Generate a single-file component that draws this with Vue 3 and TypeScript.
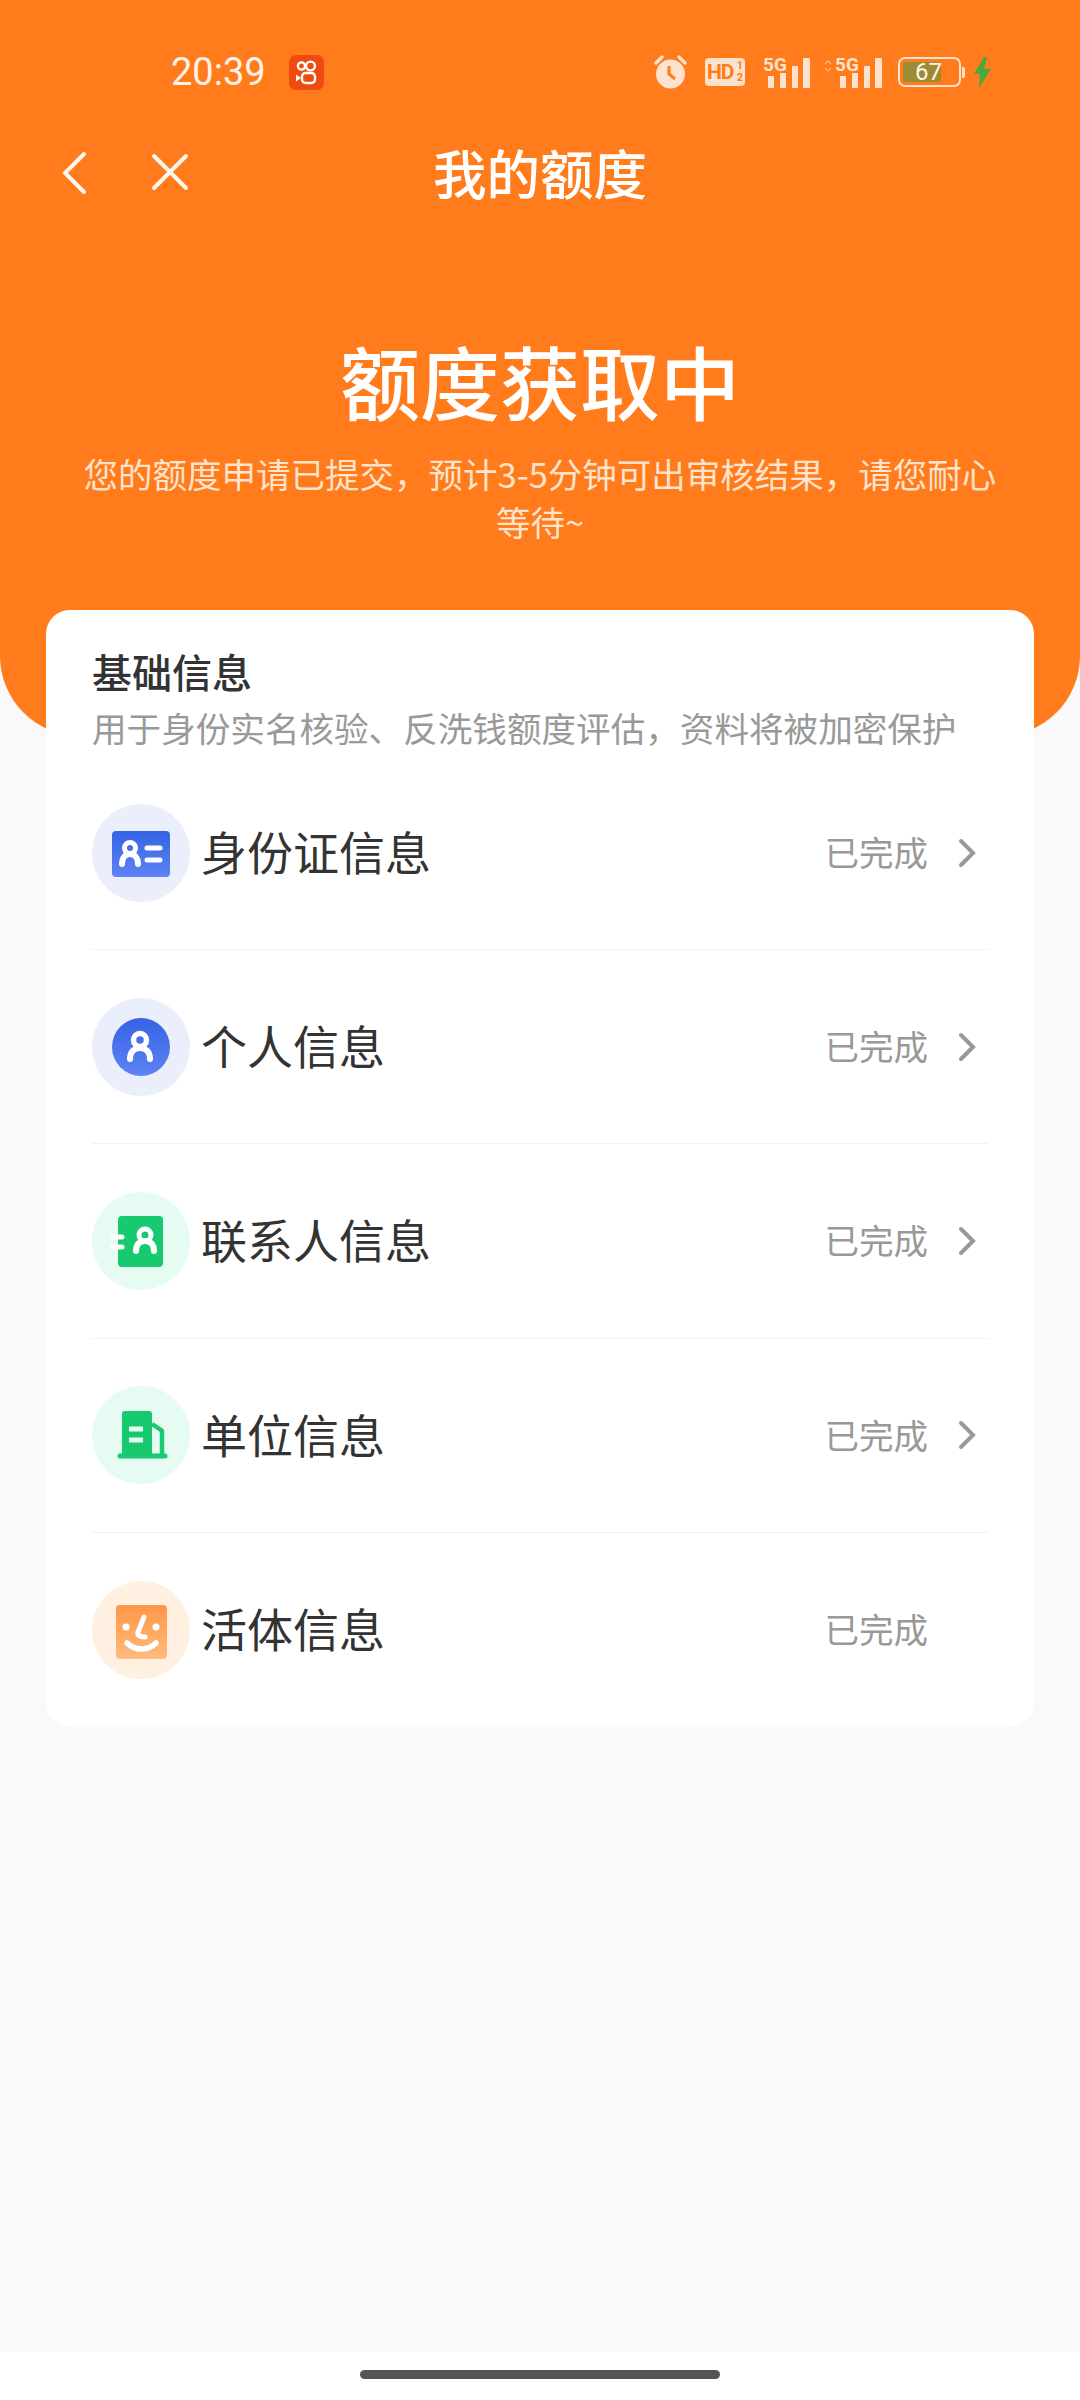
<script setup lang="ts">
interface InfoRow {
  label: string;
  icon: 'card' | 'person' | 'book' | 'building' | 'face';
  tint: string;
  arrow: boolean;
}

const rows: InfoRow[] = [
  { label: '身份证信息', icon: 'card', tint: '#ebeffb', arrow: true },
  { label: '个人信息', icon: 'person', tint: '#ebeffb', arrow: true },
  { label: '联系人信息', icon: 'book', tint: '#e6fcf2', arrow: true },
  { label: '单位信息', icon: 'building', tint: '#e6fcf2', arrow: true },
  { label: '活体信息', icon: 'face', tint: '#fff0e1', arrow: false },
];
</script>

<template>
  <div class="page">
    <header class="hero">
      <div class="status">
        <div class="status-left">
          <span class="time">20:39</span>
          <svg class="ks" width="35" height="35" viewBox="0 0 35 35">
            <rect width="35" height="35" rx="7" fill="#ee4b10" />
            <g fill="none" stroke="#fff" stroke-width="2.4">
              <circle cx="12.5" cy="11" r="3.6" />
              <circle cx="21.5" cy="11" r="4.4" />
              <rect x="13" y="18" width="13" height="10" rx="3.5" />
            </g>
            <path d="M7 19.5l5 3.5-5 3.500z" fill="#fff" />
          </svg>
        </div>
        <div class="status-right">
          <svg width="33" height="34" viewBox="0 0 33 34">
            <circle cx="16.500" cy="19" r="14.500" fill="#fde3cd" />
            <path d="M15 11v8l6 5" fill="none" stroke="#ff7b1c" stroke-width="3" />
            <path d="M2 8l6-6M31 8l-6-6" stroke="#fde3cd" stroke-width="3.500" stroke-linecap="round" />
          </svg>
          <span class="hd"><b>HD</b><i>1<br />2</i></span>
          <svg class="sig" width="47" height="32" viewBox="0 0 47 32">
            <text x="0" y="15" class="five-g">5G</text>
            <g fill="#fde3cd">
              <rect x="5" y="20" width="6" height="12" />
              <rect x="17" y="17" width="6" height="15" />
              <rect x="29" y="10" width="6" height="22" />
              <rect x="40" y="2" width="7" height="30" />
            </g>
          </svg>
          <svg class="sig" width="59" height="32" viewBox="0 0 59 32">
            <path d="M2 8l3-3 3 3M2 12l3 3 3-3" fill="none" stroke="#ffb27a" stroke-width="1.500" />
            <text x="12" y="15" class="five-g">5G</text>
            <g fill="#fde3cd">
              <rect x="17" y="20" width="6" height="12" />
              <rect x="29" y="17" width="6" height="15" />
              <rect x="41" y="10" width="6" height="22" />
              <rect x="52" y="2" width="7" height="30" />
            </g>
          </svg>
          <div class="battery">
            <div class="cell"><span class="level">67</span></div>
            <span class="nub"></span>
          </div>
          <svg class="bolt" width="19" height="31" viewBox="0 0 19 31">
            <path d="M11 0L1 17h6l-1 14 12-19h-7l3-12z" fill="#45ab3c" />
          </svg>
        </div>
      </div>

      <nav class="nav">
        <svg class="back" width="26" height="44" viewBox="0 0 26 44">
          <path d="M23 3L4 22l19 19" fill="none" stroke="#fff6ee" stroke-width="4" stroke-linecap="round" />
        </svg>
        <svg class="close" width="40" height="40" viewBox="0 0 40 40">
          <path d="M4 4l32 32M36 4L4 36" fill="none" stroke="#fff6ee" stroke-width="4" stroke-linecap="round" />
        </svg>
        <h1 class="nav-title">我的额度</h1>
      </nav>

      <h2 class="headline">额度获取中</h2>
      <p class="sub">您的额度申请已提交，预计3-5分钟可出审核结果，请您耐心等待~</p>
    </header>

    <main class="card">
      <div class="card-head">
        <h3>基础信息</h3>
        <p>用于身份实名核验、反洗钱额度评估，资料将被加密保护</p>
      </div>

      <div v-for="row in rows" :key="row.label" class="row">
        <span class="badge" :style="{ background: row.tint }">
          <svg width="98" height="98" viewBox="0 0 98 98">
            <defs>
              <linearGradient id="blue" x1="0" y1="0" x2="0" y2="1">
                <stop offset="0" stop-color="#3563e3" />
                <stop offset="1" stop-color="#5f83f6" />
              </linearGradient>
              <linearGradient id="peach" x1="0" y1="0" x2="0" y2="1">
                <stop offset="0" stop-color="#ff9746" />
                <stop offset="1" stop-color="#ffbb7d" />
              </linearGradient>
            </defs>

            <g v-if="row.icon === 'card'">
              <rect x="20" y="27" width="58" height="46" rx="4" fill="url(#blue)" />
              <g fill="none" stroke="#fff" stroke-linecap="round">
                <circle cx="38" cy="44" r="5.500" stroke-width="5" />
                <path d="M30 60c0-6 3-10 8-10s8 4 8 10" stroke-width="6" />
                <path d="M55 44h13M55 56h13" stroke-width="5" />
              </g>
            </g>

            <g v-else-if="row.icon === 'person'">
              <circle cx="49" cy="49" r="29" fill="url(#blue)" />
              <g fill="none" stroke="#fff" stroke-linecap="round">
                <circle cx="48" cy="42" r="6.500" stroke-width="5.500" />
                <path d="M38 61c0-7 4-11 10-11s10 4 10 11" stroke-width="6" />
              </g>
            </g>

            <g v-else-if="row.icon === 'book'">
              <rect x="26" y="24" width="45" height="51" rx="4" fill="#17c96f" />
              <path d="M21 45h9M21 55h9" stroke="#fff" stroke-width="5" stroke-linecap="round" />
              <g fill="none" stroke="#fff" stroke-linecap="round">
                <circle cx="53" cy="43" r="6" stroke-width="5" />
                <path d="M44 59c0-6 3-10 9-10s9 4 9 10" stroke-width="6" />
              </g>
            </g>

            <g v-else-if="row.icon === 'building'">
              <path d="M30 28a3 3 0 0 1 3-3h24a3 3 0 0 1 3 3v42H30z" fill="#17c96f" />
              <path d="M60 38l9 6a3 3 0 0 1 1 3v23" fill="none" stroke="#17c96f" stroke-width="4.500" />
              <path d="M28 70h45" stroke="#17c96f" stroke-width="5" stroke-linecap="round" />
              <path d="M37 43h14M37 54h14" stroke="#e6fcf2" stroke-width="5" />
            </g>

            <g v-else>
              <rect x="24" y="24" width="51" height="54" rx="4" fill="url(#peach)" />
              <circle cx="34" cy="46" r="3.500" fill="#fff" />
              <circle cx="64" cy="46" r="3.500" fill="#fff" />
              <g fill="none" stroke="#fff" stroke-linecap="round">
                <path d="M52 36l-6 15c-1 3 2 5 7 5" stroke-width="5" />
                <path d="M35 62c8 8 21 8 29 0" stroke-width="5.500" />
              </g>
            </g>
          </svg>
        </span>
        <span class="label">{{ row.label }}</span>
        <span class="state">已完成</span>
        <span class="arrow-box">
          <svg v-if="row.arrow" width="18" height="30" viewBox="0 0 18 30">
            <path d="M3 3l12 12L3 27" fill="none" stroke="#999" stroke-width="4" stroke-linecap="round" />
          </svg>
        </span>
      </div>
    </main>

    <footer class="home-bar">
      <span class="indicator"></span>
    </footer>
  </div>
</template>

<style>
html,
body {
  margin: 0;
  background: #f9f9f9;
}
</style>

<style scoped>
.page {
  width: 1080px;
  height: 2400px;
  display: flex;
  flex-direction: column;
  background: #f9f9f9;
  font-family: "Noto Sans CJK SC", "Noto Sans", sans-serif;
}

.hero {
  height: 736px;
  flex-shrink: 0;
  box-sizing: border-box;
  background: #ff7b1c;
  border-radius: 0 0 80px 80px;
  color: #fff;
  text-align: center;
}

.status {
  height: 54px;
  padding: 45px 88px 0 171px;
  display: flex;
  justify-content: space-between;
  align-items: center;
}

.status-left {
  display: flex;
  align-items: center;
  gap: 23px;
}

.time {
  font-family: Roboto, sans-serif;
  font-size: 38px;
  line-height: 54px;
  color: #fff3e8;
}

.status-right {
  display: flex;
  align-items: center;
  gap: 18px;
}

.hd {
  width: 40px;
  height: 28px;
  box-sizing: border-box;
  padding: 0 2px;
  border-radius: 4px;
  background: #fde3cd;
  color: #ff7b1c;
  display: flex;
  align-items: center;
  justify-content: space-between;
  font-family: Roboto, sans-serif;
}

.hd b {
  font-size: 21px;
  line-height: 28px;
  letter-spacing: -1px;
}

.hd i {
  font-style: normal;
  font-weight: 700;
  font-size: 11px;
  line-height: 12px;
  text-align: center;
}

.sig {
  overflow: visible;
}

.sig + .sig {
  margin-left: -5px;
}

.five-g {
  font-family: Roboto, sans-serif;
  font-size: 19px;
  font-weight: 700;
  fill: #fde3cd;
}

.battery {
  display: flex;
  align-items: center;
  gap: 1px;
  margin-left: -2px;
}

.cell {
  width: 63px;
  height: 30px;
  box-sizing: border-box;
  border: 2px solid #fde3cd;
  border-radius: 7px;
  padding: 3px;
}

.level {
  display: block;
  width: 26px;
  height: 20px;
  background: #9d8b33;
  border-radius: 2px;
  padding-left: 12px;
  font-family: Roboto, sans-serif;
  font-size: 24px;
  line-height: 21px;
  text-align: left;
  color: #fff3e8;
}

.nub {
  width: 3px;
  height: 11px;
  border-radius: 0 2px 2px 0;
  background: #fde3cd;
}

.bolt {
  margin-left: -10px;
}

.nav {
  position: relative;
  height: 76px;
  margin-top: 35px;
  display: flex;
  align-items: center;
  justify-content: center;
}

.back {
  position: absolute;
  left: 61px;
  top: 17px;
}

.close {
  position: absolute;
  left: 150px;
  top: 18px;
}

.nav-title {
  margin: 0;
  font-size: 53.500px;
  font-weight: 500;
  line-height: 76px;
  color: #fff;
}

.headline {
  margin: 113px 0 0;
  font-size: 80px;
  font-weight: 500;
  line-height: 112px;
  color: #fff;
}

.sub {
  margin: 14px 80px 0;
  font-size: 34.500px;
  line-height: 48px;
  color: #ffe3cc;
}

.card {
  width: 988px;
  margin: -126px auto 0;
  position: relative;
  box-sizing: border-box;
  padding: 0 46px;
  background: #fff;
  border-radius: 24px;
}

.card-head {
  height: 146px;
  box-sizing: border-box;
  padding-top: 35px;
}

.card-head h3 {
  margin: 0;
  font-size: 40px;
  font-weight: 500;
  line-height: 52px;
  color: #333;
}

.card-head p {
  margin: 5px 0 0;
  font-size: 34.600px;
  line-height: 50px;
  color: #999;
  white-space: nowrap;
}

.row {
  height: 194.200px;
  box-sizing: border-box;
  display: flex;
  align-items: center;
  border-bottom: 1px solid #f2f2f2;
}

.row:last-child {
  border-bottom: none;
}

.badge {
  width: 98px;
  height: 98px;
  flex-shrink: 0;
  border-radius: 50%;
  display: block;
}

.badge svg {
  display: block;
}

.label {
  flex: 1;
  margin-left: 11px;
  margin-bottom: 5px;
  font-size: 46px;
  line-height: 60px;
  color: #333;
}

.state {
  margin-bottom: 3px;
  font-size: 34.500px;
  line-height: 50px;
  color: #999;
}

.arrow-box {
  width: 48px;
  height: 30px;
  display: flex;
  justify-content: flex-end;
  padding-right: 12px;
}

.home-bar {
  margin-top: auto;
  height: 48px;
  background: #fff;
  display: flex;
  justify-content: center;
  padding-top: 18px;
  box-sizing: border-box;
}

.indicator {
  width: 360px;
  height: 9px;
  border-radius: 5px;
  background: #555;
}
</style>
